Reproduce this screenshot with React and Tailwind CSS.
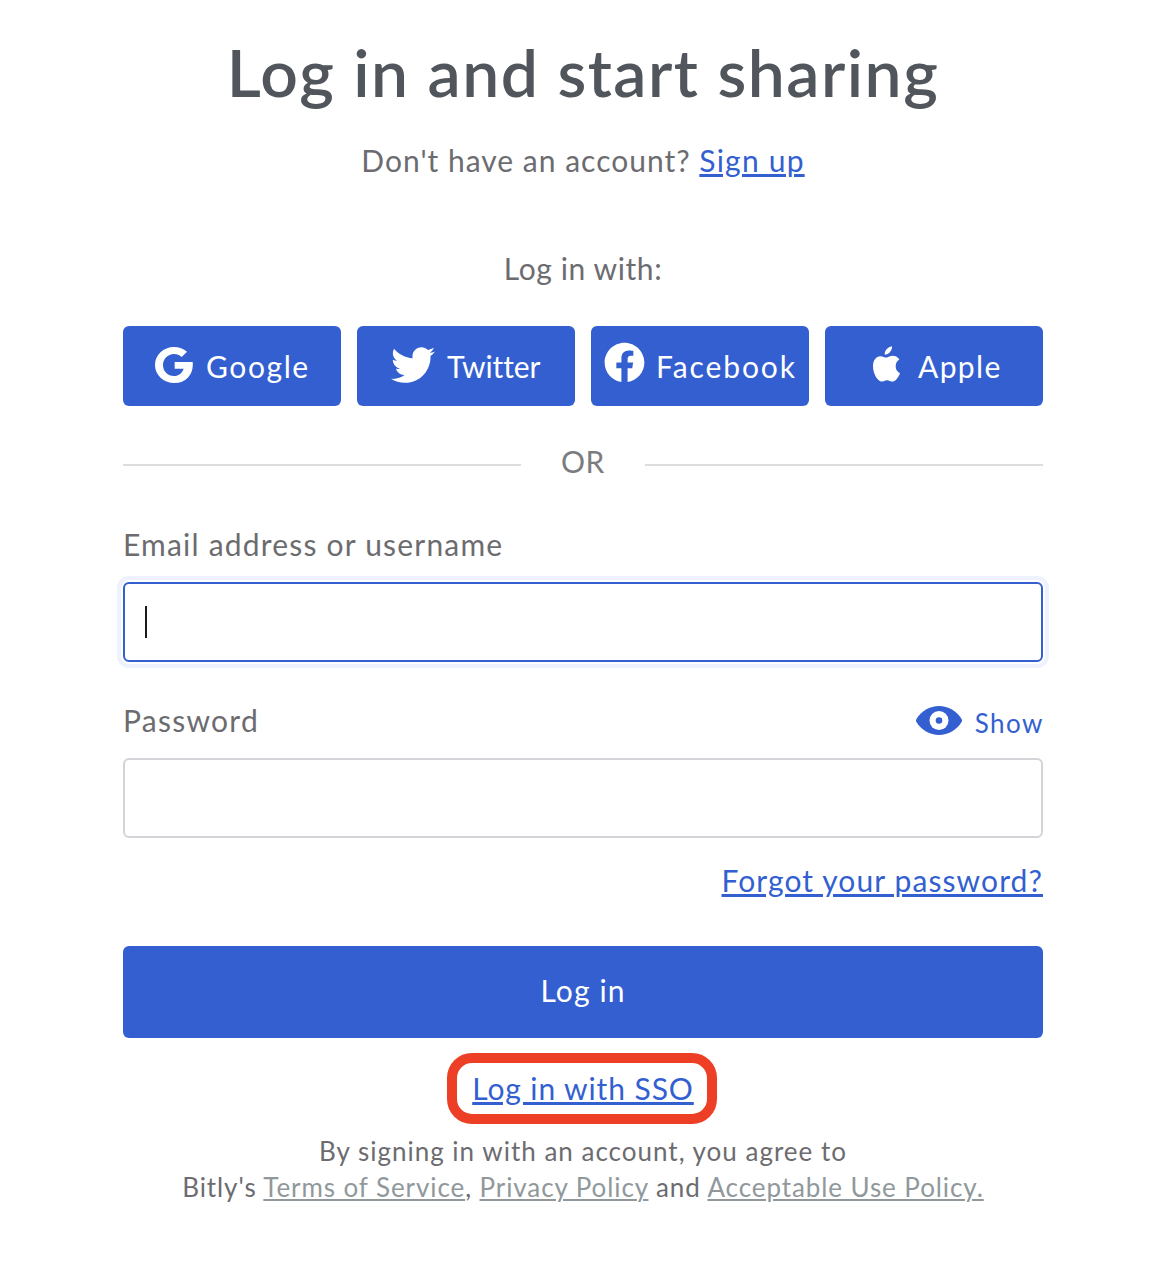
import { FaFacebook, FaTwitter } from 'react-icons/fa'

function GoogleIcon({ className }) {
  return (
    <svg viewBox="0 0 114 108" fill="currentColor" className={className}>
      <path d="M96 14L80 30C74 24 66 21 57 21C38 21 24 36 24 54C24 73 38 87 57 87C72 87 82 77 86 65L59 65L59 45L113 45C117 80 95 108 58 108C25 108 0 84 0 54C0 24 25 0 57 0C72 0 86 5 96 14Z" />
    </svg>
  )
}

function AppleIcon({ className }) {
  return (
    <svg viewBox="0 0 81 107" fill="currentColor" className={className}>
      <path d="M57 0C58 12 48 26 35 25C34 14 44 2 57 0Z" />
      <path d="M40 34C35 34 30 30 22 30C10 30 0 41 0 60C0 84 15 106 26 106C32 106 35 102 42 102C49 102 52 106 58 106C68 106 77 92 81 81C73 78 68 70 68 61C68 51 72 44 79 40C74 32 66 29 59 29C51 29 46 34 40 34Z" />
    </svg>
  )
}

function EyeIcon({ className }) {
  return (
    <svg viewBox="0 0 46 29" fill="currentColor" className={className}>
      <path d="M0.3 13.2C5 5 14 0 23 0S41 5 45.7 13.2Q46.3 14.5 45.7 15.8C41 24 32 29 23 29S5 24 0.3 15.8Q-0.3 14.5 0.3 13.2Z" />
      <circle cx="23" cy="14.5" r="9.5" fill="#fff" />
      <circle cx="23" cy="14.5" r="3.3" />
    </svg>
  )
}

const PROVIDERS = [
  { name: 'Google', Icon: GoogleIcon, icon: 'w-[38px] h-9 ml-8 -mt-0.5', label: 'ml-[13px] tracking-[1.6px]' },
  { name: 'Twitter', Icon: FaTwitter, icon: 'w-11 h-11 ml-[34px] -mt-0.5', label: 'ml-3 tracking-[-0.1px]' },
  { name: 'Facebook', Icon: FaFacebook, icon: 'w-[41px] h-[41px] ml-[12.5px] -mt-[7px]', label: 'ml-[11.5px] tracking-[1.9px]' },
  { name: 'Apple', Icon: AppleIcon, icon: 'w-[27px] h-9 ml-12 -mt-[5px]', label: 'ml-[18px] tracking-[1.4px]' },
]

const LINK = 'underline decoration-[3px] underline-offset-[2px] text-[#335fd0]'
const LEGAL_LINK = 'underline decoration-2 underline-offset-[2px] text-[#90989c]'

export default function App() {
  return (
    <main className="w-[1172px] h-[1262px] bg-white pt-8 pl-[123px] overflow-hidden font-['Lato',sans-serif] text-[30px] leading-10 tracking-[1.1px] text-[#6c6c70] whitespace-nowrap">
      <div className="w-[920px]">
        <h1 className="text-center text-[66px] leading-[80px] font-semibold tracking-[1.5px] text-[#50565b]">
          Log in and start sharing
        </h1>
        <p className="mt-7 text-center tracking-[1px]">
          Don't have an account? <a className={`${LINK} tracking-[1.2px]`}>Sign up</a>
        </p>
        <p className="mt-[68px] text-center tracking-[0.6px]">Log in with:</p>

        <div className="mt-[38px] grid grid-cols-4 gap-4">
          {PROVIDERS.map(({ name, Icon, icon, label }) => (
            <button key={name} className="flex items-center h-20 rounded-md bg-[#335fd0] text-white">
              <Icon className={`shrink-0 ${icon}`} />
              <span className={label}>{name}</span>
            </button>
          ))}
        </div>

        <div className="mt-[35px] flex items-center h-10">
          <div className="w-[398px] h-0.5 mt-[7px] bg-[#dddddf]" />
          <span className="flex-1 text-center tracking-[0.5px] text-[#7c7c80]">OR</span>
          <div className="w-[398px] h-0.5 mt-[7px] bg-[#dddddf]" />
        </div>

        <div className="mt-[43px] tracking-[1.2px]">Email address or username</div>
        <div className="mt-[18px] flex items-center h-20 px-5 rounded-md border-2 border-[#335fd0] shadow-[0_0_0_2px_#fff,0_0_0_6px_#edf2fe]">
          <span className="w-0.5 h-8 bg-[#1a1a1a]" />
        </div>

        <div className="mt-[38px] flex items-center justify-between h-10">
          <span className="tracking-[1.25px]">Password</span>
          <button className="flex items-center text-[26px] text-[#335fd0]">
            <EyeIcon className="w-[46px] h-[29px] mr-[13px]" />
            <span className="pt-[5px] -mr-px tracking-[1.5px]">Show</span>
          </button>
        </div>
        <div className="mt-[18px] h-20 rounded-md border-2 border-[#d3d4d7]" />

        <div className="mt-[22px] text-right"><a className={LINK}>Forgot your password?</a></div>
        <button className="mt-[46px] w-full h-[92px] pb-1 rounded-md bg-[#335fd0] text-white">Log in</button>

        <div className="mt-[15px] ml-[324px] w-[270px] h-[71px] pb-0.5 pl-0.5 flex items-center justify-center rounded-[25px] border-[10px] border-[#ec3f26]">
          <a className={`${LINK} tracking-[0.9px]`}>Log in with SSO</a>
        </div>

        <div className="mt-[9px] text-center text-[26px] leading-9">
          <p className="tracking-[1px]">By signing in with an account, you agree to</p>
          <p className="tracking-[0.91px]">
            Bitly's <a className={LEGAL_LINK}>Terms of Service</a>, <a className={LEGAL_LINK}>Privacy Policy</a> and{' '}
            <a className={LEGAL_LINK}>Acceptable Use Policy.</a>
          </p>
        </div>
      </div>
    </main>
  )
}
